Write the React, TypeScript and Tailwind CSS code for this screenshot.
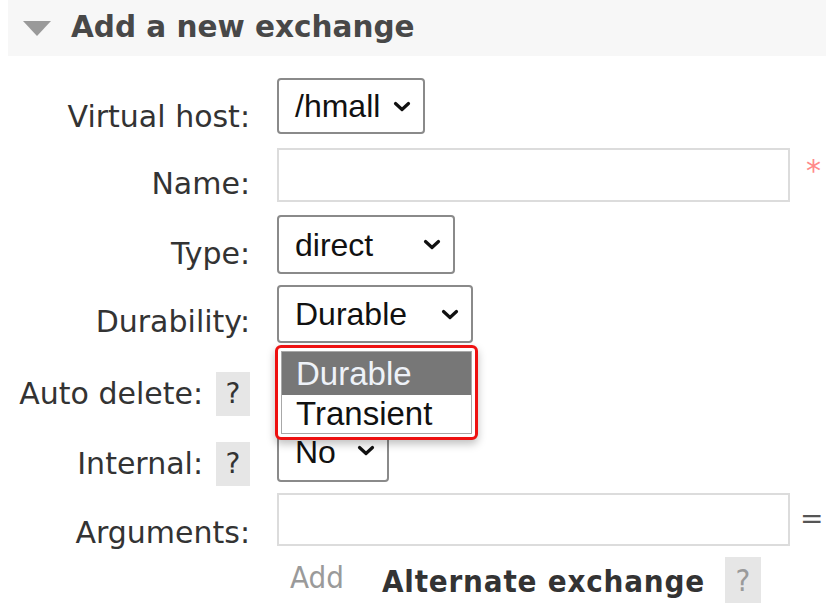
import React from 'react';

const labelFont = { fontFamily: '"DejaVu Sans", Verdana, sans-serif' };
const selectFont = { fontFamily: '"Liberation Sans", Arial, sans-serif' };
const condFont = { fontFamily: '"DejaVu Sans Condensed", "DejaVu Sans", sans-serif' };

function Chevron() {
  return (
    <svg width="18" height="11" viewBox="0 0 18 11" className="shrink-0">
      <path d="M2.5 2.5 L9 8.5 L15.5 2.5" fill="none" stroke="#111" strokeWidth="3.2" strokeLinecap="round" strokeLinejoin="round" />
    </svg>
  );
}

function FakeSelect({ value, width, height }: { value: string; width: string; height: string }) {
  return (
    <div
      className={`${width} ${height} flex items-center justify-between pl-[16px] pr-[12px] border-2 border-[#8a8a8a] rounded-[4px] bg-white text-[32px] leading-none text-[#111]`}
      style={selectFont}
    >
      <span>{value}</span>
      <Chevron />
    </div>
  );
}

function Help({ light }: { light?: boolean }) {
  return (
    <span
      className={`inline-flex items-center justify-center w-[34px] h-[44px] bg-[#e6e6e6] leading-none ${light ? 'w-[36px] h-[46px] text-[#9a9a9a] text-[31px]' : 'text-[#333] text-[28px]'}`}
      style={light ? condFont : labelFont}
    >
      ?
    </span>
  );
}

function Label({ children, cls }: { children: React.ReactNode; cls: string }) {
  return (
    <div className={`w-[250px] shrink-0 flex items-center justify-end gap-[13px] ${cls} text-[30px] leading-none text-[#333]`} style={labelFont}>
      {children}
    </div>
  );
}

export default function App() {
  return (
    <div className="w-[826px] h-[616px] bg-white overflow-hidden relative">
      {/* 标题栏 */}
      <div className="ml-2 h-[56px] bg-[#f7f7f7] flex items-center pl-[15px]">
        <svg width="28" height="15" viewBox="0 0 28 15">
          <polygon points="0,0 28,0 14,15" fill="#9a9a9a" />
        </svg>
        <h2 className="ml-[20px] text-[29.5px] leading-none font-bold text-[#484848]" style={labelFont}>
          Add a new exchange
        </h2>
      </div>

      <div className="flex flex-col">
        {/* Virtual host */}
        <div className="flex items-start mt-[22px] h-[56px]">
          <Label cls="h-[56px] pt-[22px]">Virtual host:</Label>
          <div className="ml-[27px]">
            <FakeSelect value="/hmall" width="w-[148px]" height="h-[56px]" />
          </div>
        </div>

        {/* Name */}
        <div className="flex items-start mt-[14px] h-[54px]">
          <Label cls="h-[54px] pt-[17px]">Name:</Label>
          <input className="ml-[27px] w-[513px] h-[54px] border-2 border-[#dcdcdc] outline-none" />
          <span className="ml-[16px] mt-[8px] text-[30px] leading-none text-[#ff8a8a]" style={labelFont}>*</span>
        </div>

        {/* Type */}
        <div className="flex items-start mt-[13px] h-[59px]">
          <Label cls="h-[59px] pt-[19px]">Type:</Label>
          <div className="ml-[27px]">
            <FakeSelect value="direct" width="w-[178px]" height="h-[59px]" />
          </div>
        </div>

        {/* Durability */}
        <div className="flex items-start mt-[11px] h-[58px]">
          <Label cls="h-[58px] pt-[15px]">Durability:</Label>
          <div className="ml-[27px] relative">
            <FakeSelect value="Durable" width="w-[196px]" height="h-[58px]" />
            {/* 展开的下拉列表 */}
            <div className="absolute left-[-2px] top-[60px] w-[203px] h-[95px] z-10 border-[3px] border-[#ee1111] rounded-[6px] bg-white p-[3px] shadow-[0_4px_8px_rgba(0,0,0,0.25)]">
              <div className="h-full border border-[#a8a8a8] flex flex-col text-[33px] leading-none" style={selectFont}>
                <div className="h-[43px] bg-[#777777] text-[#eef2f8] flex items-center pl-[14px]">Durable</div>
                <div className="flex-1 flex items-center pl-[14px] pb-[2px] text-[#111]">Transient</div>
              </div>
            </div>
          </div>
        </div>

        {/* Auto delete */}
        <div className="flex items-start mt-[13px] h-[56px]">
          <Label cls="h-[56px] pt-[20px]">
            <span>Auto delete:</span>
            <Help />
          </Label>
          <div className="ml-[27px]">
            <FakeSelect value="No" width="w-[112px]" height="h-[56px]" />
          </div>
        </div>

        {/* Internal */}
        <div className="flex items-start mt-[14px] h-[56px]">
          <Label cls="h-[56px] pt-[20px]">
            <span>Internal:</span>
            <Help />
          </Label>
          <div className="ml-[27px]">
            <div
              className="w-[112px] h-[56px] flex items-start justify-between pl-[16px] pr-[12px] border-2 border-[#8a8a8a] rounded-[4px] bg-white text-[32px] text-[#111] leading-none pt-[8px]"
              style={selectFont}
            >
              <span>No</span>
              <span className="mt-[9px]"><Chevron /></span>
            </div>
          </div>
        </div>

        {/* Arguments */}
        <div className="flex items-start mt-[11px] h-[53px]">
          <Label cls="h-[53px] pt-[26px]">Arguments:</Label>
          <input className="ml-[27px] w-[513px] h-[53px] border-2 border-[#dcdcdc] outline-none" />
          <span className="ml-[10px] mt-[12px] text-[28px] leading-none text-[#555]" style={labelFont}>=</span>
        </div>

        {/* Add / Alternate exchange */}
        <div className="flex items-center mt-[11px] h-[46px]">
          <div className="w-[290px] shrink-0" />
          <span className="text-[31px] leading-none text-[#9a9a9a] -mt-[6px]" style={condFont}>Add</span>
          <span className="ml-[38px] text-[31px] leading-none font-bold tracking-[0.8px] text-[#333] mt-[2px]" style={condFont}>
            Alternate exchange
          </span>
          <span className="ml-[20px]">
            <Help light />
          </span>
        </div>
      </div>
    </div>
  );
}
